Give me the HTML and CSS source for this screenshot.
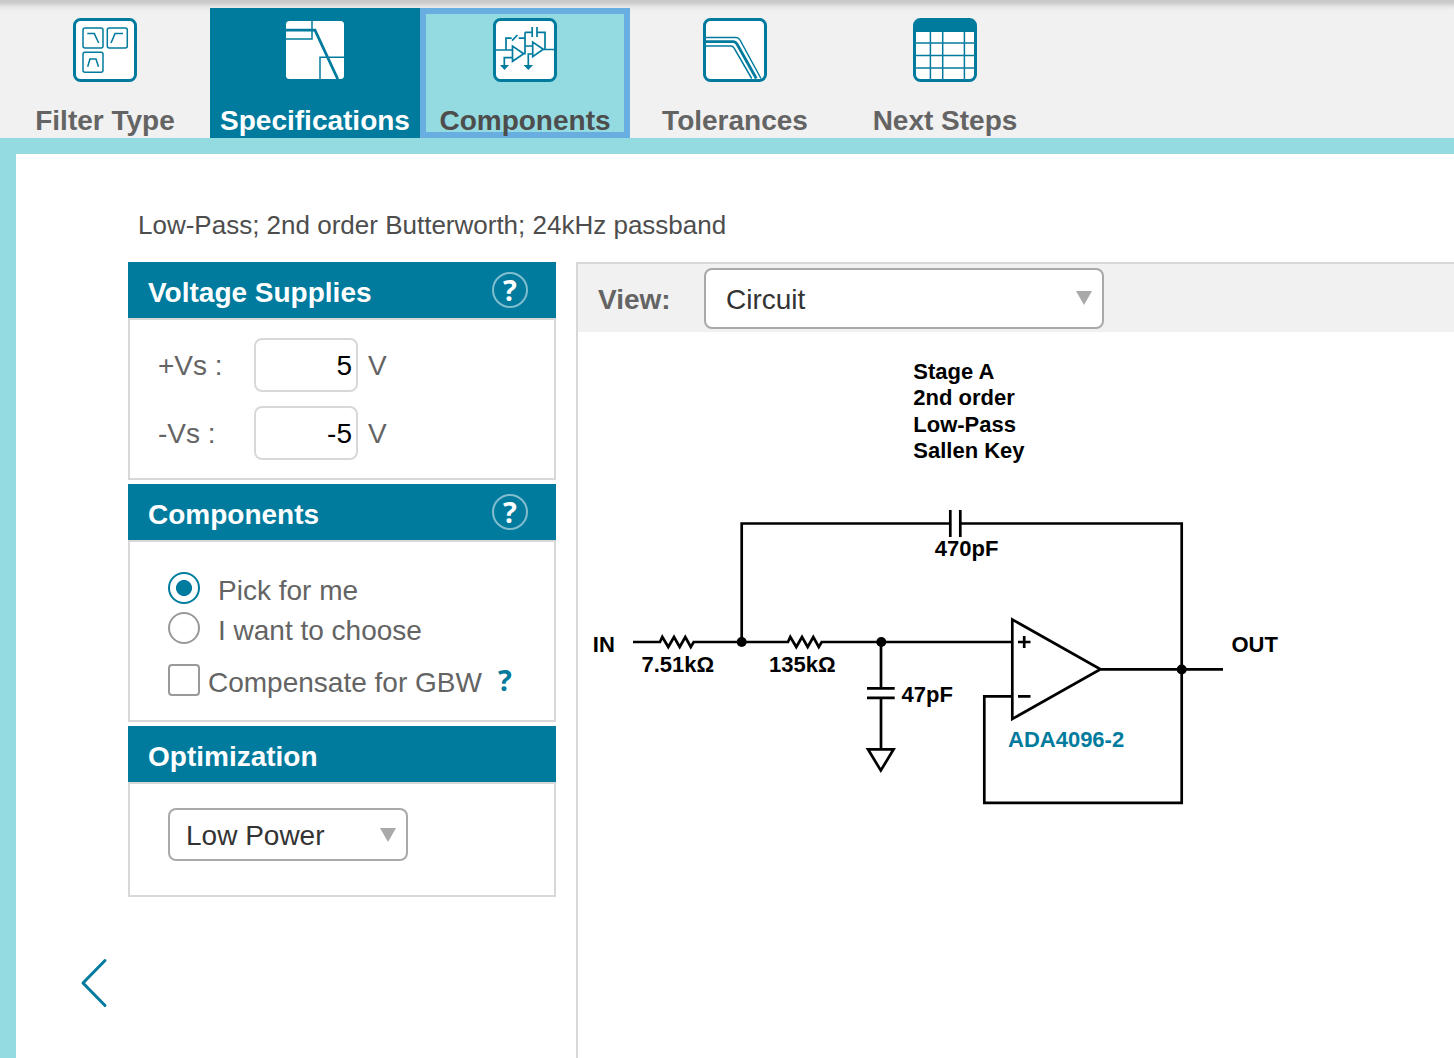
FILE: index.html
```html
<!DOCTYPE html>
<html lang="en">
<head>
<meta charset="utf-8">
<title>Filter Wizard</title>
<link rel="stylesheet" href="styles.css">
</head>
<body>
<nav class="tabs">
  <a class="tab">
    <svg class="tab-icon" viewBox="0 0 64 64">
      <rect class="frame" x="1.5" y="1.5" width="61" height="61" rx="6"/>
      <g class="thin">
        <rect x="10" y="10" width="20" height="20" rx="2"/>
        <rect x="34.3" y="10" width="20" height="20" rx="2"/>
        <rect x="10" y="34.2" width="20" height="20" rx="2"/>
        <path d="M14.3 15.6H21.3L25.7 25M38 25L42 15.6H50M14.7 48.7L16.9 41H23L25.5 48.7"/>
      </g>
    </svg>
    <span>Filter Type</span>
  </a>
  <a class="tab active">
    <svg class="tab-icon" viewBox="0 0 64 64">
      <rect x="3" y="3" width="58" height="58" rx="3.5" fill="#fff"/>
      <path class="thin" d="M29 3V21H3M61 39.2H37V61"/>
      <path class="thick" d="M3 12.2H32L54.7 61"/>
    </svg>
    <span>Specifications</span>
  </a>
  <a class="tab focused">
    <svg class="tab-icon" viewBox="0 0 64 64">
      <rect class="frame" x="1.5" y="1.5" width="61" height="61" rx="6"/>
      <path class="wire" d="M3 32H19.5M13 32V20.2H18.7M19 22.7L24.5 17M25.7 20.2H32M32 14.3V35.7H30.7M32 14.3H39M39.2 9V19M44 9V19M44 14.3H52V31.3M19.5 28V43.3L30.7 35.7ZM32 28H39.7M39.7 24V38.7L50.3 31.3ZM50.3 31.5H62M39.7 36H35.3V47.3M19.3 39.7H11.3V47.3"/>
      <path fill="#007b9e" d="M7 47H16L11.5 52ZM30.5 47H40L35.3 52Z"/>
    </svg>
    <span>Components</span>
  </a>
  <a class="tab">
    <svg class="tab-icon" viewBox="0 0 64 64">
      <rect class="frame" x="1.5" y="1.5" width="61" height="61" rx="6"/>
      <path class="thin" d="M3 19.4H33Q35.6 19.4 37 22L58 60.5M3 28H28Q30 28 31 30L48.7 60.5"/>
      <path class="thick" d="M3 23.7H30.5Q32.5 23.7 34 26L53.3 60.5"/>
    </svg>
    <span>Tolerances</span>
  </a>
  <a class="tab">
    <svg class="tab-icon" viewBox="0 0 64 64">
      <rect class="frame" x="1.5" y="1.5" width="61" height="61" rx="6"/>
      <path fill="#007b9e" d="M1 14V7Q1 1 7 1H57Q63 1 63 7V14Z"/>
      <path class="thin" d="M17.4 14V61M29.7 14V61M51.4 14V61M3 24.9H61M3 37.4H61M3 49.9H61"/>
    </svg>
    <span>Next Steps</span>
  </a>
</nav>

<main class="stage">
  <p class="summary">Low-Pass; 2nd order Butterworth; 24kHz passband</p>
  <div class="workspace">
    <div class="pager">
      <svg width="28" height="50" viewBox="0 0 28 50"><path d="M25 2.5L3 25L25 47.5" fill="none" stroke="#007b9e" stroke-width="3" stroke-linecap="round" stroke-linejoin="round"/></svg>
    </div>

    <aside class="sidebar">
      <section class="card">
        <header class="card-head"><h2>Voltage Supplies</h2><span class="help">?</span></header>
        <div class="card-body supplies">
          <label class="supply"><span class="supply-name">+Vs :</span><input class="supply-input" value="5"><span class="supply-unit">V</span></label>
          <label class="supply"><span class="supply-name">-Vs :</span><input class="supply-input" value="-5"><span class="supply-unit">V</span></label>
        </div>
      </section>
      <section class="card">
        <header class="card-head"><h2>Components</h2><span class="help">?</span></header>
        <div class="card-body choices">
          <label class="choice"><i class="radio checked"></i><span>Pick for me</span></label>
          <label class="choice"><i class="radio"></i><span>I want to choose</span></label>
          <label class="choice compensate"><i class="checkbox"></i><span>Compensate for GBW</span><b class="help-inline">?</b></label>
        </div>
      </section>
      <section class="card">
        <header class="card-head"><h2>Optimization</h2></header>
        <div class="card-body optimize">
          <div class="select select-small"><span>Low Power</span><i class="arrow"></i></div>
        </div>
      </section>
    </aside>

    <section class="viewer">
      <header class="viewer-bar">
        <span class="viewer-label">View:</span>
        <div class="select select-view"><span>Circuit</span><i class="arrow"></i></div>
      </header>
      <svg class="circuit" width="876" height="726" viewBox="578 332 876 726">
        <g class="lines">
          <path d="M633 642H660L662.3 637L668.3 647L674 637L679.7 647L685.3 637L690.8 647L693.7 642H788L790.3 637L796.3 647L802 637L807.7 647L813.3 637L818.8 647L821.7 642H1012"/>
          <path d="M741.7 642V523.5H950M961 523.5H1181.7V802.8H984.3V696.4H1012"/>
          <path d="M950.3 510V537M960.3 510V537"/>
          <path d="M881 642V688M867 688.3H894.7M867 697.8H894.7M881 698V749"/>
          <path d="M868 749.3H893.6L880.8 770.5Z"/>
          <path d="M1012.3 619.5V719L1100.5 669.3ZM1100 669.3H1223"/>
          <path d="M1018 642H1030.5M1024.2 636V648M1018 696.4H1030.5"/>
        </g>
        <circle cx="741.7" cy="642" r="5"/><circle cx="881.3" cy="642" r="5"/><circle cx="1181.7" cy="669.5" r="5"/>
        <text x="913.3" y="379">Stage A</text>
        <text x="913.3" y="405">2nd order</text>
        <text x="913.3" y="432">Low-Pass</text>
        <text x="913.3" y="458">Sallen Key</text>
        <text x="934.8" y="556">470pF</text>
        <text x="592.8" y="652">IN</text>
        <text x="641.5" y="672">7.51kΩ</text>
        <text x="769" y="672">135kΩ</text>
        <text x="901.5" y="702">47pF</text>
        <text x="1231.5" y="652">OUT</text>
        <text class="part" x="1008" y="747">ADA4096-2</text>
      </svg>
    </section>
  </div>
</main>
</body>
</html>
```
FILE: styles.css
```css
* { box-sizing: border-box; }

body {
  margin: 0;
  height: 1058px;
  overflow: hidden;
  display: flex;
  flex-direction: column;
  background: #fff;
  color: #646464;
  font: 28px/32px "Liberation Sans", Arial, sans-serif;
}

/* Step navigation */
.tabs {
  display: flex;
  flex: none;
  height: 138px;
  padding-top: 8px;
  background: linear-gradient(#c6c6c6, #cecece 3px, #e6e6e6 7px, #f1f1f1 11px);
}
.tab {
  width: 210px;
  display: flex;
  flex-direction: column;
  align-items: center;
  gap: 23px;
  padding-top: 10px;
  font-weight: bold;
  white-space: nowrap;
}
.tab-icon { width: 64px; height: 64px; flex: none; }
.tab.active { background: #007b9e; color: #fff; }
.tab.focused {
  background: #94dbe1;
  color: #4d4d4d;
  box-shadow: inset 0 0 0 6px #68aee0;
}
.frame { fill: #fff; stroke: #007b9e; stroke-width: 3; }
.thin { fill: none; stroke: #007b9e; stroke-width: 1.5; }
.wire { fill: none; stroke: #007b9e; stroke-width: 1.7; }
.thick { fill: none; stroke: #007b9e; stroke-width: 2.8; }

/* Page area */
.stage {
  flex: 1;
  display: flex;
  flex-direction: column;
  border-top: 16px solid #94dbe1;
  border-left: 16px solid #94dbe1;
}
.summary {
  margin: 0;
  height: 108px;
  padding: 56px 0 0 122px;
  font-size: 26px;
  line-height: 30px;
  color: #4d4d4d;
}
.workspace { flex: 1; display: flex; }
.pager { width: 112px; padding: 696px 0 0 64px; line-height: 0; }
.sidebar {
  width: 428px;
  margin-right: 20px;
  display: flex;
  flex-direction: column;
  gap: 4px;
}

.card-head {
  height: 56px;
  display: flex;
  justify-content: space-between;
  padding: 0 28px 0 20px;
  background: #007b9e;
  color: #fff;
}
.card-head h2 { margin: 0; font-size: 28px; line-height: 62px; }
.help {
  width: 36px;
  height: 36px;
  margin-top: 10px;
  border: 2px solid #80bdce;
  border-radius: 50%;
  font: bold 29px/31px "Open Sans", sans-serif;
  text-align: center;
}
.card-body { border: 2px solid #d8d8d8; }

.supplies { height: 162px; padding: 18px 28px; display: grid; gap: 14px; align-content: start; }
.supply { display: flex; align-items: center; height: 54px; }
.supply-name { width: 96px; padding-top: 2px; }
.supply-unit { padding-top: 2px; }
.supply-input {
  width: 104px;
  height: 54px;
  margin-right: 10px;
  padding: 2px 4px 0;
  border: 2px solid #d8d8d8;
  border-radius: 8px;
  font: inherit;
  color: #000;
  text-align: right;
}

.choices { height: 182px; padding: 30px 38px; }
.choice { display: flex; height: 32px; margin-bottom: 8px; }
.choice span { padding-left: 18px; line-height: 38px; }
.radio, .checkbox { width: 32px; height: 32px; flex: none; border: 2px solid #999; }
.radio { border-radius: 50%; }
.radio.checked {
  border: 2px solid #007b9e;
  background: radial-gradient(circle, #007b9e 7.6px, #fff 8.4px);
}
.checkbox { border-radius: 4px; }
.choice.compensate { margin-top: 20px; }
.choice.compensate span { padding-left: 8px; }
.help-inline {
  padding-left: 16px;
  font: bold 29px/32px "Open Sans", sans-serif;
  color: #007b9e;
}

.optimize { height: 115px; padding: 24px 38px; }
.select {
  display: flex;
  align-items: center;
  justify-content: space-between;
  border: 2px solid #a9a9a9;
  border-radius: 8px;
  background: #fff;
  color: #333;
}
.select span { padding-top: 2px; }
.select-small { width: 240px; height: 53px; padding: 0 10px 0 16px; }
.select-view { width: 400px; height: 61px; padding: 0 10px 0 20px; }
.select-view span { padding-top: 4px; }
.arrow {
  border: 8px solid transparent;
  border-top: 14px solid #a9a9a9;
  border-bottom: 0;
}

/* Circuit viewer */
.viewer { flex: 1; border-left: 2px solid #d8d8d8; border-top: 2px solid #d8d8d8; }
.viewer-bar {
  display: flex;
  align-items: center;
  height: 68px;
  padding: 0 0 0 20px;
  background: #f1f1f1;
}
.viewer-label { width: 106px; padding-top: 4px; font-weight: bold; }
.circuit { display: block; }
.circuit text { font: bold 22px "Liberation Sans", Arial, sans-serif; fill: #000; }
.circuit text.part { fill: #007b9e; }
.lines { fill: none; stroke: #000; stroke-width: 2.7; }
```
